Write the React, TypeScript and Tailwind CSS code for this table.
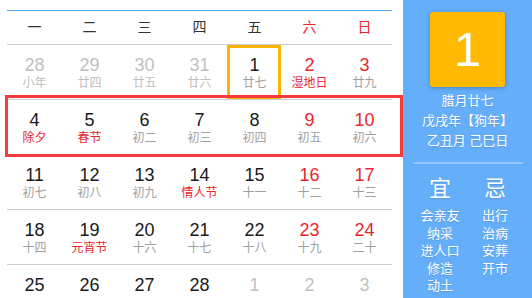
import React from "react";

type Cell = { d: string; l?: string; dc: string; lc: string };

const G = "text-[#c0c0c0]";
const K = "text-[#1a1a1a]";
const R = "text-[#e8262d]";
const L = "text-[#a0a0a0]";

const rows: Cell[][] = [
  [
    { d: "28", l: "小年", dc: G, lc: G },
    { d: "29", l: "廿四", dc: G, lc: G },
    { d: "30", l: "廿五", dc: G, lc: G },
    { d: "31", l: "廿六", dc: G, lc: G },
    { d: "1", l: "廿七", dc: K, lc: L },
    { d: "2", l: "湿地日", dc: R, lc: R },
    { d: "3", l: "廿九", dc: R, lc: L },
  ],
  [
    { d: "4", l: "除夕", dc: K, lc: R },
    { d: "5", l: "春节", dc: K, lc: R },
    { d: "6", l: "初二", dc: K, lc: L },
    { d: "7", l: "初三", dc: K, lc: L },
    { d: "8", l: "初四", dc: K, lc: L },
    { d: "9", l: "初五", dc: R, lc: L },
    { d: "10", l: "初六", dc: R, lc: L },
  ],
  [
    { d: "11", l: "初七", dc: K, lc: L },
    { d: "12", l: "初八", dc: K, lc: L },
    { d: "13", l: "初九", dc: K, lc: L },
    { d: "14", l: "情人节", dc: K, lc: R },
    { d: "15", l: "十一", dc: K, lc: L },
    { d: "16", l: "十二", dc: R, lc: L },
    { d: "17", l: "十三", dc: R, lc: L },
  ],
  [
    { d: "18", l: "十四", dc: K, lc: L },
    { d: "19", l: "元宵节", dc: K, lc: R },
    { d: "20", l: "十六", dc: K, lc: L },
    { d: "21", l: "十七", dc: K, lc: L },
    { d: "22", l: "十八", dc: K, lc: L },
    { d: "23", l: "十九", dc: R, lc: L },
    { d: "24", l: "二十", dc: R, lc: L },
  ],
  [
    { d: "25", dc: K, lc: L },
    { d: "26", dc: K, lc: L },
    { d: "27", dc: K, lc: L },
    { d: "28", dc: K, lc: L },
    { d: "1", dc: G, lc: G },
    { d: "2", dc: G, lc: G },
    { d: "3", dc: G, lc: G },
  ],
];

const week = ["一", "二", "三", "四", "五", "六", "日"];

export default function App() {
  return (
    <div
      className="relative flex w-[532px] h-[298px] overflow-hidden bg-white"
      style={{ fontFamily: '"Liberation Sans", "Noto Sans CJK SC", sans-serif' }}
    >
      <div className="pl-[7px] pt-[10px] w-[396px]">
        <div className="w-[385px] border-t border-[#5aa9f5]">
          <div className="grid grid-cols-7 h-[33px] items-center text-[14px]">
            {week.map((w, i) => (
              <div
                key={w}
                className={`text-center ${i >= 5 ? "text-[#e8262d]" : "text-[#333]"}`}
              >
                {w}
              </div>
            ))}
          </div>
          {rows.map((row, ri) => (
            <div key={ri} className="grid grid-cols-7 h-[55px] border-t border-[#cccccc]">
              {row.map((c, ci) => (
                <div key={ci} className="relative flex flex-col items-center pt-[10px]">
                  <div className={`text-[18px] leading-[20px] ${c.dc}`}>{c.d}</div>
                  {c.l && <div className={`text-[12px] leading-[16px] ${c.lc}`}>{c.l}</div>}
                  {ri === 0 && ci === 4 && (
                    <div className="absolute left-0 top-0 w-[54px] h-[54px] border-[3px] border-[#f7b500]" />
                  )}
                </div>
              ))}
            </div>
          ))}
        </div>
      </div>

      <div className="absolute left-[5px] top-[95px] w-[398px] h-[62px] border-[3px] border-[#f53b3b]" />

      <div className="ml-auto w-[129px] h-full bg-[#64aefa] flex flex-col items-center text-white">
        <div className="mt-[12px] w-[75px] h-[75px] rounded-[3px] bg-[#ffb900] shadow-[0_1px_4px_rgba(0,0,0,0.25)] flex items-center justify-center text-[49px] leading-none">
          1
        </div>
        <div className="mt-[4px] flex flex-col items-center text-[13px] leading-[20px] [text-shadow:0_1px_1px_rgba(0,0,0,0.12)]">
          <div>腊月廿七</div>
          <div>戊戌年【狗年】</div>
          <div>乙丑月 己巳日</div>
        </div>
        <div className="mt-[11px] w-[110px] h-[2px] bg-white/30" />
        <div className="mt-[11px] w-[110px] flex [text-shadow:0_1px_1px_rgba(0,0,0,0.12)]">
          <div className="flex-1 flex flex-col items-center">
            <div className="text-[22px] leading-[28px]">宜</div>
            <div className="mt-[4px] flex flex-col items-center text-[13px] leading-[17.5px]">
              <div>会亲友</div>
              <div>纳采</div>
              <div>进人口</div>
              <div>修造</div>
              <div>动土</div>
            </div>
          </div>
          <div className="flex-1 flex flex-col items-center">
            <div className="text-[22px] leading-[28px]">忌</div>
            <div className="mt-[4px] flex flex-col items-center text-[13px] leading-[17.5px]">
              <div>出行</div>
              <div>治病</div>
              <div>安葬</div>
              <div>开市</div>
            </div>
          </div>
        </div>
      </div>
    </div>
  );
}
